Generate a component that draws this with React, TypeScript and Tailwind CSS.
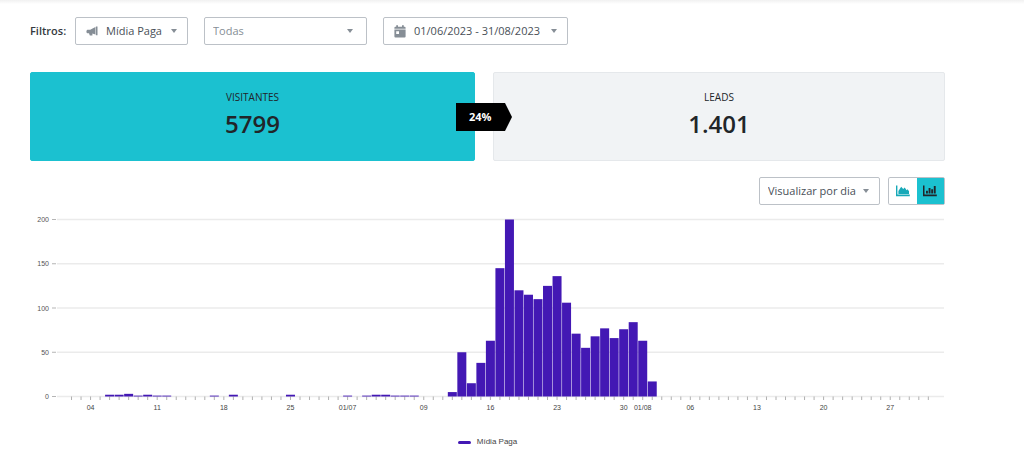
import { useState } from "react";
import type { ReactNode } from "react";
import clsx from "clsx";

const CHART_WIDTH = 915;
const BASELINE = 184.5;
const UNIT = 0.885;
const FIRST_DAY_X = 32;
const DAY_STEP = 9.52;

// visits per day, starting on 01/06
const visits = [
  0, 0, 0, 0, 0, 2, 2, 3, 1, 2, 1, 1, 0, 0, 0, 0, 1, 0, 2, 0, 0, 0, 0, 0, 2, 0, 0, 0, 0, 0,
  1, 0, 1, 2, 2, 1, 1, 1, 0, 0, 0, 5, 50, 15, 38, 63, 145, 200, 120, 115, 110, 125, 136, 106, 71, 55, 68, 77, 66, 76, 84,
  63, 17, 0, 0, 0, 0, 0, 0, 0, 0, 0, 0, 0, 0, 0, 0, 0, 0, 0, 0, 0, 0, 0, 0, 0, 0, 0, 0, 0, 0, 0,
];

const dayLabels = [
  { day: 3, label: "04" },
  { day: 10, label: "11" },
  { day: 17, label: "18" },
  { day: 24, label: "25" },
  { day: 30, label: "01/07" },
  { day: 38, label: "09" },
  { day: 45, label: "16" },
  { day: 52, label: "23" },
  { day: 59, label: "30" },
  { day: 61, label: "01/08" },
  { day: 66, label: "06" },
  { day: 73, label: "13" },
  { day: 80, label: "20" },
  { day: 87, label: "27" },
];

const dayX = (day: number) => FIRST_DAY_X + day * DAY_STEP;
const valueY = (value: number) => BASELINE - value * UNIT;

const Caret = () => (
  <svg viewBox="0 0 6 4" className="h-1 w-1.5 shrink-0 fill-[#868e96]" aria-hidden="true">
    <path d="M0 0h6L3 4z" />
  </svg>
);

const MegaphoneIcon = () => (
  <svg viewBox="0 0 12 10" className="h-2.5 w-3 shrink-0 fill-[#868e96]" aria-hidden="true">
    <path d="M9.4 1v7.6L6.4 7.6v1.9H3.8L3 7.3H1.3Q.4 7 .4 5.6T1.3 3.8H4.2zM9.9.6h1.6v8.6H9.9z" />
  </svg>
);

const CalendarIcon = () => (
  <svg viewBox="0 0 12 13" className="h-[13px] w-3 shrink-0 fill-[#868e96]" aria-hidden="true">
    <path d="M2.2.3h1.8v1.5h4V.3h1.8v1.5h.8q1 0 1 1v1H.4v-1q0-1 1-1h.8z" />
    <path
      fillRule="evenodd"
      d="M.4 4.5h11.2v7q0 1-1 1H1.4q-1 0-1-1zM2.2 6.2v2.8H5V6.2z"
    />
  </svg>
);

const AreaIcon = () => (
  <svg viewBox="0 0 14 12" className="h-3 w-3.5 fill-current" aria-hidden="true">
    <path d="M0 .5h1.4v9.1h12.4v1.6H0z" />
    <path d="M2.4 9.1V6L5.2 1.8l2 2.1 1.5-1.4 1.9 2.7 1-.9 1.4 2v2.8z" />
  </svg>
);

const BarsIcon = () => (
  <svg viewBox="0 0 14 12" className="h-3 w-3.5 fill-current" aria-hidden="true">
    <path d="M0 .5h1.5v9.1h12.3v1.6H0zM3 5.8h1.9v2.8H3zM5.6 3h1.9v5.6H5.6zM8.2 4.2h1.9v4.4H8.2zM10.8 1h1.9v7.6h-1.9z" />
  </svg>
);

type SelectBoxProps = {
  label: string;
  options: string[];
  icon?: ReactNode;
  className?: string;
};

const SelectBox = ({ label, options, icon, className }: SelectBoxProps) => (
  <label
    className={clsx(
      "flex h-7 items-center rounded-[2px] border border-[#bcc1c7] bg-white text-[11px]",
      className
    )}
  >
    {icon}
    <select aria-label={label} className="min-w-0 flex-1 appearance-none bg-transparent outline-none">
      {options.map((option) => (
        <option key={option}>{option}</option>
      ))}
    </select>
    <Caret />
  </label>
);

const VisitsChart = () => (
  <svg viewBox={`0 0 ${CHART_WIDTH} 205`} className="block w-full" role="img" aria-label="Visitantes por dia">
    {[0, 50, 100, 150, 200].map((value) => (
      <g key={value}>
        <path d={`M27 ${valueY(value)}H914`} stroke="#ebebeb" strokeWidth="1.3" />
        <path d={`M22 ${valueY(value)}H26`} stroke="#b5b5b5" />
        <text x="19" y={valueY(value) + 2.5} textAnchor="end" className="fill-[#555555] text-[7px]">
          {value}
        </text>
      </g>
    ))}
    {visits.map((_, day) =>
      day > 0 ? (
        <path key={day} d={`M${dayX(day)} ${BASELINE}v3.5`} stroke="#b0b0b0" />
      ) : null
    )}
    {visits.map((value, day) =>
      value > 0 ? (
        <rect
          key={day}
          x={dayX(day) - 4.5}
          y={valueY(value)}
          width="9"
          height={value * UNIT}
          className="fill-[#4318b4]"
        />
      ) : null
    )}
    {dayLabels.map(({ day, label }) => (
      <text key={day} x={dayX(day)} y="198" textAnchor="middle" className="fill-[#444444] text-[7px]">
        {label}
      </text>
    ))}
  </svg>
);

const App = () => {
  const [view, setView] = useState<"area" | "bars">("bars");

  return (
    <div className="bg-white font-['Open_Sans',sans-serif] text-[#495057]">
      <div className="h-1 bg-linear-to-b from-[#f1f1f1] to-white" />
      <main className="pt-[13px] pr-[79px] pb-4 pl-[30px]">
        <form className="flex items-center">
          <span className="w-[45px] text-[11px] font-semibold whitespace-nowrap text-[#343a40]">Filtros:</span>
          <SelectBox
            label="Origem"
            options={["Mídia Paga"]}
            icon={<MegaphoneIcon />}
            className="w-[113px] gap-2 px-[10px]"
          />
          <SelectBox
            label="Campanha"
            options={["Todas"]}
            className="ml-4 w-[163px] pr-[13px] pl-2 text-[#868e96]"
          />
          <button
            type="button"
            className="ml-4 flex h-7 w-[185px] items-center gap-2 rounded-[2px] border border-[#bcc1c7] px-[10px] text-[11px] whitespace-nowrap"
          >
            <CalendarIcon />
            <span className="flex-1 text-left">01/06/2023 - 31/08/2023</span>
            <Caret />
          </button>
        </form>

        <section className="mt-[27px] grid grid-cols-[445fr_452fr] gap-[18px] text-center">
          <div className="relative h-[89px] rounded-[2px] border border-[#1bc1d0] bg-[#1bc1d0] pt-4 text-[#212529]">
            <h2 className="text-[10px] leading-4 font-medium">VISITANTES</h2>
            <p className="mt-[3px] text-2xl leading-8 font-semibold">5799</p>
            <div className="absolute top-[30px] -right-[38px] z-10 flex h-7 w-14 items-center bg-black pl-[13px] text-[11px] font-bold text-white [clip-path:polygon(0_0,49px_0,100%_50%,49px_100%,0_100%)]">
              24%
            </div>
          </div>
          <div className="h-[89px] rounded-[2px] border border-[#e5e8eb] bg-[#f1f3f5] pt-4 text-[#212529]">
            <h2 className="text-[10px] leading-4 font-medium">LEADS</h2>
            <p className="mt-[3px] text-2xl leading-8 font-semibold">1.401</p>
          </div>
        </section>

        <div className="mt-4 flex justify-end gap-2">
          <SelectBox
            label="Agrupamento"
            options={["Visualizar por dia"]}
            className="w-[121px] pr-[10px] pl-2"
          />
          <div className="flex h-7 w-[57px] overflow-hidden rounded-[2px]">
            <button
              type="button"
              aria-label="Gráfico de área"
              aria-pressed={view === "area"}
              onClick={() => setView("area")}
              className={clsx(
                "flex flex-1 items-center justify-center rounded-l-[2px] border border-r-0",
                view === "area"
                  ? "border-[#1bc1d0] bg-[#1bc1d0] text-[#212529]"
                  : "border-[#bcc1c7] text-[#17a9b8]"
              )}
            >
              <AreaIcon />
            </button>
            <button
              type="button"
              aria-label="Gráfico de barras"
              aria-pressed={view === "bars"}
              onClick={() => setView("bars")}
              className={clsx(
                "flex flex-1 items-center justify-center rounded-r-[2px] border border-l-0",
                view === "bars"
                  ? "border-[#bcc1c7] bg-[#1bc1d0] text-[#212529]"
                  : "border-[#bcc1c7] text-[#17a9b8]"
              )}
            >
              <BarsIcon />
            </button>
          </div>
        </div>

        <section className="mt-[7px] font-['Liberation_Sans',sans-serif]">
          <VisitsChart />
          <div className="mt-[17px] flex items-center justify-center gap-[6px] text-[8px] leading-4 text-[#444444]">
            <span className="h-[3px] w-[13px] rounded-full bg-[#4318b4]" />
            Mídia Paga
          </div>
        </section>
      </main>
    </div>
  );
};

export default App;
